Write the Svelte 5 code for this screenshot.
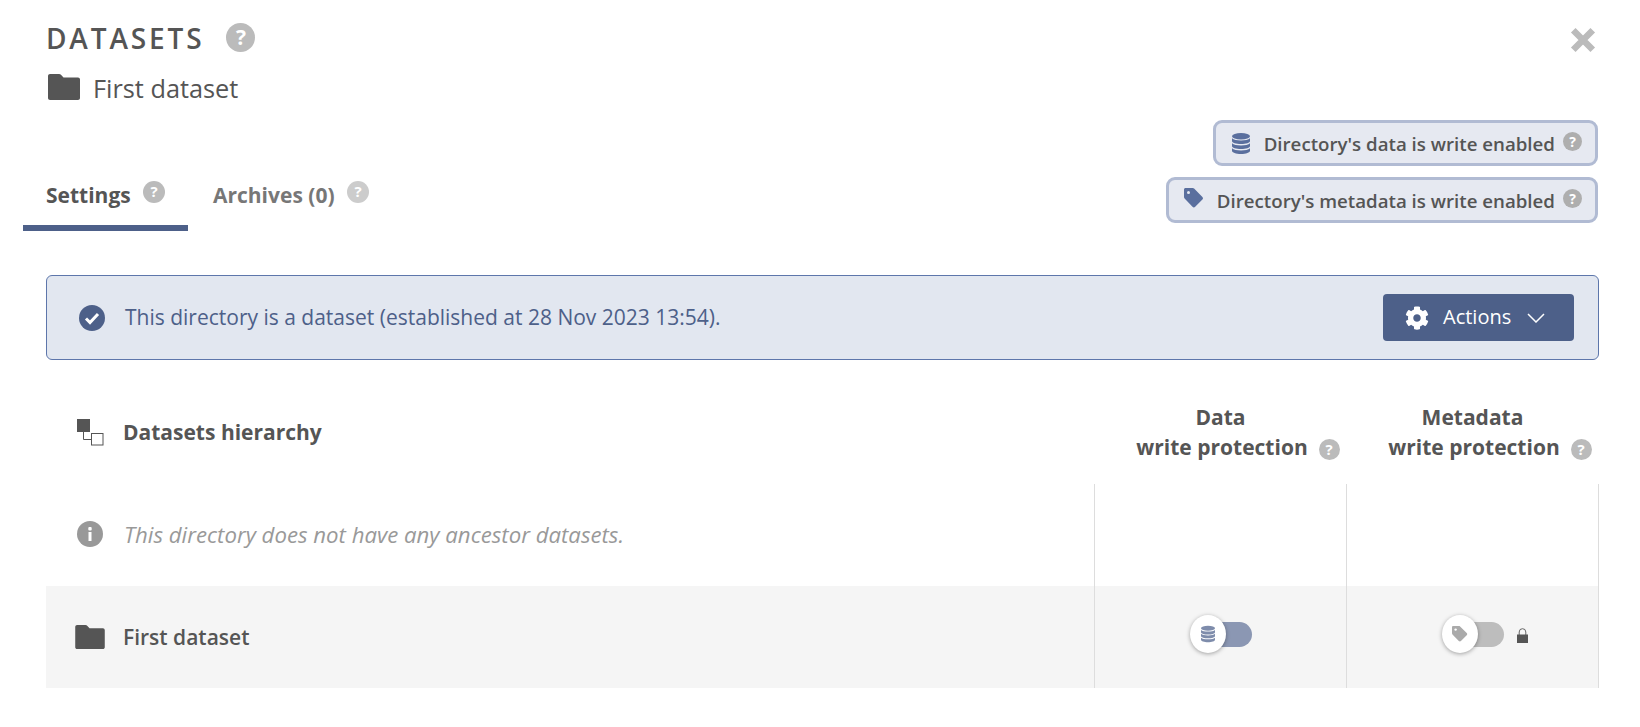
<script>
	const cogPath =
		'M487.4 315.7l-42.6-24.6c4.3-23.2 4.3-47 0-70.2l42.6-24.6c4.9-2.8 7.1-8.6 5.5-14-11.1-35.6-30-67.8-54.7-94.6-3.8-4.1-10-5.1-14.8-2.3L380.8 110c-17.9-15.4-38.5-27.3-60.8-35.1V25.8c0-5.6-3.9-10.5-9.4-11.7-36.7-8.2-74.3-7.8-109.2 0-5.5 1.2-9.4 6.1-9.4 11.7V75c-22.2 7.9-42.8 19.8-60.8 35.1L88.7 85.5c-4.9-2.8-11-1.9-14.8 2.3-24.7 26.7-43.6 58.9-54.7 94.6-1.7 5.4.6 11.2 5.5 14L67.3 221c-4.3 23.2-4.3 47 0 70.2l-42.6 24.6c-4.9 2.8-7.1 8.6-5.5 14 11.1 35.6 30 67.8 54.7 94.6 3.8 4.1 10 5.1 14.8 2.3l42.6-24.6c17.9 15.4 38.5 27.3 60.8 35.1v49.2c0 5.6 3.9 10.5 9.4 11.7 36.7 8.2 74.3 7.8 109.2 0 5.5-1.2 9.4-6.1 9.4-11.7v-49.2c22.2-7.9 42.8-19.8 60.8-35.1l42.6 24.6c4.9 2.8 11 1.9 14.8-2.3 24.7-26.7 43.6-58.9 54.7-94.6 1.5-5.5-.7-11.3-5.6-14.1zM256 336c-44.1 0-80-35.9-80-80s35.9-80 80-80 80 35.9 80 80-35.9 80-80 80z';
	const folderPath =
		'M2 0h9c1 0 1.600 .4 2.200 1l2.300 2.600H30c1.100 0 2 .9 2 2V24c0 1.100-.9 2-2 2H2c-1.100 0-2-.9-2-2V2C0 .9.900 0 2 0z';
	const tagPath = 'M1.500 0h7.200c.6 0 1 .2 1.400 .6l8.300 8.300c.8 .8 .8 1.900 0 2.700l-7.200 7.200c-.8 .8-1.900 .8-2.700 0L.6 10.500C.2 10.100 0 9.700 0 9.100V1.500C0 .7.700 0 1.500 0z';
</script>

{#snippet help(cls)}
	<span class="help {cls}">?</span>
{/snippet}

{#snippet folder(cls)}
	<svg class={cls} viewBox="0 0 32 26"><path d={folderPath} /></svg>
{/snippet}

{#snippet database(cls)}
	<svg class={cls} viewBox="0 0 18 21">
		<ellipse cx="9" cy="3.200" rx="9" ry="3.200" />
		<path d="M0 5.200c1.500 1.500 5 2.200 9 2.200s7.500-.7 9-2.200v2.900c0 1.800-4 3-9 3s-9-1.200-9-3z" />
		<path d="M0 10.200c1.500 1.500 5 2.200 9 2.200s7.500-.7 9-2.200v2.900c0 1.800-4 3-9 3s-9-1.200-9-3z" />
		<path d="M0 15.200c1.500 1.500 5 2.200 9 2.200s7.500-.7 9-2.200v2.600c0 1.800-4 3.200-9 3.200s-9-1.400-9-3.200z" />
	</svg>
{/snippet}

<div class="page">
	<header class="title-row">
		<div>
			<div class="title">
				<h1>DATASETS</h1>
				{@render help('help-lg')}
			</div>
			<div class="current">
				{@render folder('folder-lg')}
				<span>First dataset</span>
			</div>
		</div>
		<svg class="close" viewBox="0 0 24 24"><path d="M3 3l18 18M21 3L3 21" /></svg>
	</header>

	<div class="tabs-row">
		<nav class="tabs">
			<div class="tab active">Settings {@render help('help-md')}</div>
			<div class="tab muted">Archives (0) {@render help('help-md help-light')}</div>
		</nav>
		<div class="badges">
			<div class="badge">
				{@render database('badge-db')}
				<span>Directory's data is write enabled</span>
				{@render help('help-sm')}
			</div>
			<div class="badge badge-meta">
				<svg class="badge-tag" viewBox="0 0 20 20"><path d={tagPath} /><circle cx="4.500" cy="4.500" r="1.500" fill="#e6e9f1" /></svg>
				<span>Directory's metadata is write enabled</span>
				{@render help('help-sm')}
			</div>
		</div>
	</div>

	<div class="alert">
		<div class="alert-text">
			<svg class="check" viewBox="0 0 26 26">
				<circle cx="13" cy="13" r="13" />
				<path d="M7 13.500l4 4 8-8.500" />
			</svg>
			<span>This directory is a dataset (established at 28 Nov 2023 13:54).</span>
		</div>
		<button class="actions">
			<svg class="cog" viewBox="0 0 512 512"><path d={cogPath} /></svg>
			<span>Actions</span>
			<svg class="chevron" viewBox="0 0 18 10"><path d="M1 1l8 8 8-8" /></svg>
		</button>
	</div>

	<div class="table">
		<div class="head name-head">
			<svg class="hierarchy" viewBox="0 0 27 27">
				<rect x="0" y="0" width="13" height="13" fill="#555" />
				<path d="M6.500 13v7.500H14" fill="none" stroke="#555" />
				<rect x="14.500" y="14.500" width="11.500" height="11.500" fill="#fff" stroke="#555" />
			</svg>
			<span>Datasets hierarchy</span>
		</div>
		<div class="head col-head">Data<br /><span class="second-line">write protection</span><span class="hang">{@render help('help-md help-head')}</span></div>
		<div class="head col-head col-meta">Metadata<br /><span class="second-line">write protection</span><span class="hang">{@render help('help-md help-head')}</span></div>

		<div class="name-cell no-ancestors">
			<svg class="info" viewBox="0 0 26 26">
				<circle cx="13" cy="13" r="13" fill="#999" />
				<rect x="11.300" y="6" width="3.400" height="3.400" rx="1" fill="#fff" />
				<rect x="11.500" y="11" width="3" height="9" fill="#fff" />
			</svg>
			<em>This directory does not have any ancestor datasets.</em>
		</div>
		<div class="cell"></div>
		<div class="cell"></div>

		<div class="name-cell row-fill">
			{@render folder('folder-sm')}
			<span>First dataset</span>
		</div>
		<div class="cell row-fill">
			<div class="toggle toggle-on">
				<div class="knob">{@render database('knob-db')}</div>
			</div>
		</div>
		<div class="cell row-fill">
			<div class="toggle toggle-off">
				<div class="knob">
					<svg class="knob-tag" viewBox="0 0 20 20"><path d={tagPath} /><circle cx="4.500" cy="4.500" r="1.500" fill="#fff" /></svg>
				</div>
				<svg class="lock" viewBox="0 0 11 15">
					<path d="M2.200 7V4a3.300 3.300 0 0 1 6.600 0v3" fill="none" stroke="#666" stroke-width="1" />
					<rect x="0" y="6.500" width="11" height="8.500" fill="#555" />
				</svg>
			</div>
		</div>
	</div>
</div>

<style>
	:global(body) {
		background: #fff;
	}

	.page {
		box-sizing: border-box;
		width: 1640px;
		height: 727px;
		padding: 0 41px 0 46px;
		font-family: 'Open Sans', sans-serif;
		color: #555;
		overflow: hidden;
	}

	.title-row {
		display: flex;
		justify-content: space-between;
		align-items: flex-start;
		height: 120px;
	}

	.title {
		display: flex;
		align-items: center;
		gap: 22px;
		height: 38px;
		margin-top: 19px;
	}

	h1 {
		margin: 0;
		font-size: 28px;
		font-weight: 600;
		letter-spacing: 2.850px;
		line-height: 38px;
	}

	.current {
		display: flex;
		align-items: center;
		gap: 13px;
		margin-top: 14px;
		font-size: 25.300px;
		line-height: 32px;
	}

	.current span {
		position: relative;
		top: 1px;
	}

	.folder-lg {
		width: 32px;
		height: 26px;
		margin-left: 2px;
		fill: #555;
	}

	.close {
		width: 26px;
		height: 26px;
		margin: 27px 3px 0 0;
		fill: none;
		stroke: #bbb;
		stroke-width: 6;
	}

	.help {
		display: inline-flex;
		align-items: center;
		justify-content: center;
		border-radius: 50%;
		background: #bbb;
		color: #fff;
		font-weight: 700;
		flex: none;
		line-height: 1;
	}

	.help-lg {
		width: 29px;
		height: 29px;
		font-size: 21px;
		margin-top: -2px;
	}

	.help-md {
		width: 22px;
		height: 22px;
		font-size: 15px;
		margin-left: 7px;
		vertical-align: 6px;
	}

	.help-light {
		background: #ccc;
	}

	.help-head {
		width: 21px;
		height: 21px;
		margin-left: 11px;
		vertical-align: 0;
	}

	.hang {
		display: inline-block;
		width: 0;
		white-space: nowrap;
	}

	.second-line {
		margin-left: 3px;
	}

	.help-sm {
		width: 19px;
		height: 19px;
		font-size: 14px;
		background: #aeaeae;
		margin: -3px 0 0 8px;
	}

	.tabs-row {
		display: flex;
		justify-content: space-between;
		align-items: flex-end;
		height: 111px;
		margin-right: 1px;
	}

	.tabs {
		display: flex;
		margin-left: -23px;
	}

	.tab {
		box-sizing: border-box;
		height: 76px;
		padding: 5px 23px 0;
		font-size: 21px;
		font-weight: 700;
		line-height: 70px;
		white-space: nowrap;
	}

	.tab.active {
		width: 165px;
		padding-right: 0;
		border-bottom: 6px solid #4d6089;
	}

	.tab.muted {
		color: #777;
		padding-left: 25px;
	}

	.badges {
		display: flex;
		flex-direction: column;
		align-items: flex-end;
		gap: 11px;
		align-self: flex-start;
	}

	.badge {
		box-sizing: border-box;
		display: flex;
		align-items: center;
		height: 46px;
		padding: 0 13px 0 16px;
		border: 3px solid #b1bbd3;
		border-radius: 9px;
		background: #e6e9f1;
		font-size: 18.700px;
		font-weight: 600;
	}

	.badge-meta {
		padding-left: 15px;
	}

	.badge-db {
		width: 18px;
		height: 21px;
		margin-right: 14px;
		fill: #5a6f9e;
	}

	.badge-tag {
		width: 20px;
		height: 20px;
		margin: -4px 13px 0 0;
		fill: #5a6f9e;
	}

	.alert {
		box-sizing: border-box;
		display: flex;
		justify-content: space-between;
		align-items: center;
		height: 85px;
		margin-top: 44px;
		padding: 0 24px 0 32px;
		border: 1px solid #5d76ab;
		border-radius: 6px;
		background: #e2e7f0;
		color: #4d6089;
		font-size: 21px;
	}

	.alert-text {
		display: flex;
		align-items: center;
		gap: 20px;
	}

	.alert-text span {
		margin-top: -2px;
	}

	.check {
		width: 26px;
		height: 26px;
		fill: #4d6089;
	}

	.check path {
		fill: none;
		stroke: #fff;
		stroke-width: 3;
	}

	.actions {
		display: flex;
		align-items: center;
		box-sizing: border-box;
		width: 191px;
		height: 47px;
		padding: 0 0 2px 22px;
		border: 0;
		border-radius: 4px;
		background: #4d6089;
		color: #fff;
		font-family: inherit;
		font-size: 20px;
		font-weight: 400;
	}

	.cog {
		width: 24px;
		height: 24px;
		margin: 2px 14px 0 0;
		fill: #fff;
	}

	.chevron {
		width: 18px;
		height: 10px;
		margin: 2px 0 0 16px;
		fill: none;
		stroke: #fff;
		stroke-width: 1.500;
	}

	.table {
		display: grid;
		grid-template-columns: 1048px 252px 253px;
		grid-template-rows: 124px 102px 102px;
	}

	.head {
		font-size: 21px;
		font-weight: 700;
		line-height: 30px;
	}

	.name-head {
		display: flex;
		align-items: center;
		padding-left: 31px;
		padding-top: 20px;
		gap: 19px;
		box-sizing: border-box;
	}

	.hierarchy {
		width: 27px;
		height: 27px;
	}

	.col-head {
		padding: 42px 0 0 1px;
		text-align: center;
		white-space: nowrap;
	}

	.col-meta {
		padding-left: 0;
	}

	.name-cell {
		display: flex;
		align-items: center;
		font-size: 21px;
	}

	.no-ancestors {
		padding-left: 31px;
		gap: 21px;
		color: #999;
		padding-bottom: 2px;
		font-size: 22.200px;
	}

	.info {
		width: 26px;
		height: 26px;
	}

	.row-fill {
		background: #f5f5f5;
	}

	.name-cell.row-fill {
		padding-left: 29px;
		gap: 18px;
		font-weight: 600;
	}

	.folder-sm {
		width: 30px;
		height: 24px;
		fill: #555;
	}

	.cell {
		display: flex;
		justify-content: center;
		align-items: center;
		border-left: 1px solid #ddd;
		padding-bottom: 6px;
		box-sizing: border-box;
	}

	.cell:last-child,
	.cell:nth-child(6) {
		border-right: 1px solid #ddd;
	}

	.toggle {
		position: relative;
		width: 59px;
		height: 25px;
		margin-left: 3px;
		border-radius: 13px;
	}

	.toggle-on {
		background: #8b97b3;
	}

	.toggle-off {
		background: #bdbdbd;
	}

	.knob {
		position: absolute;
		left: -3px;
		top: -7px;
		display: flex;
		align-items: center;
		justify-content: center;
		width: 36px;
		height: 38px;
		border-radius: 50%;
		background: #fff;
		box-shadow: 0 1px 4px rgba(0, 0, 0, 0.35);
	}

	.knob-db {
		width: 14px;
		height: 18px;
		fill: #7e8cab;
	}

	.knob-tag {
		width: 16px;
		height: 16px;
		fill: #aaa;
	}

	.lock {
		position: absolute;
		left: 72px;
		top: 6px;
		width: 11px;
		height: 15px;
	}
</style>
